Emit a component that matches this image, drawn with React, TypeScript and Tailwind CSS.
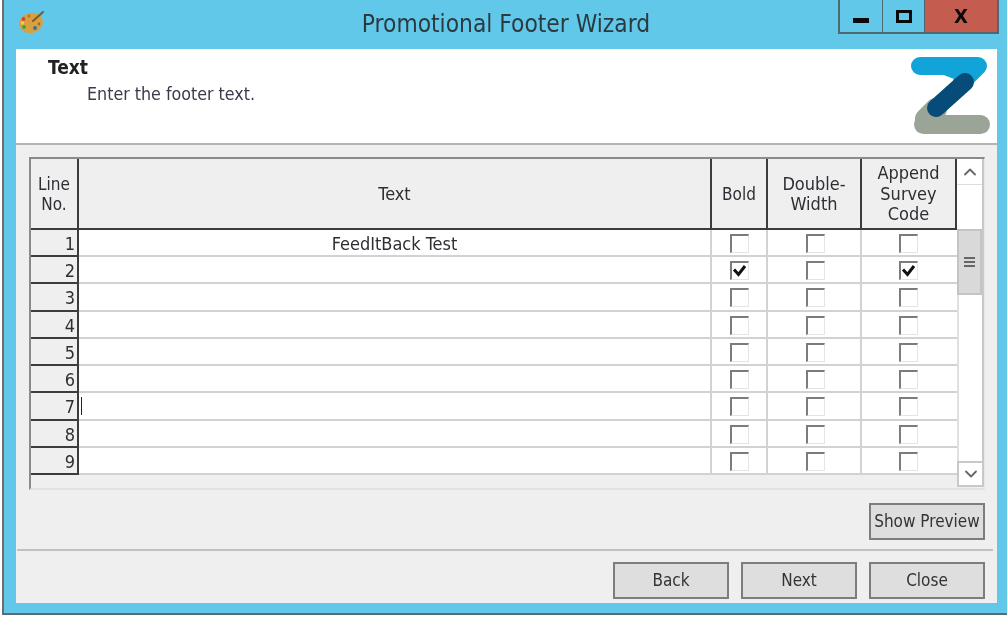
import { ChevronDown, ChevronUp } from 'lucide-react';

const rows = [
    { no: 1, text: 'FeedItBack Test', bold: false, append: false, tall: false },
    { no: 2, text: '', bold: true, append: true, tall: false },
    { no: 3, text: '', bold: false, append: false, tall: true },
    { no: 4, text: '', bold: false, append: false, tall: false },
    { no: 5, text: '', bold: false, append: false, tall: false },
    { no: 6, text: '', bold: false, append: false, tall: false },
    { no: 7, text: '', bold: false, append: false, tall: true },
    { no: 8, text: '', bold: false, append: false, tall: false },
    { no: 9, text: '', bold: false, append: false, tall: false },
];

const Palette = () => (
    <svg width="28" height="26" viewBox="0 0 28 26">
        <ellipse cx="13" cy="14" rx="12" ry="10" fill="#d9a040" transform="rotate(-15 13 14)" />
        <circle cx="5.5" cy="10" r="1.9" fill="#d8442e" />
        <circle cx="4.5" cy="14" r="1.7" fill="#e8d44a" />
        <circle cx="6" cy="18" r="1.9" fill="#4f9a45" />
        <circle cx="11" cy="7" r="1.5" fill="#b5702c" />
        <circle cx="17" cy="19" r="1.9" fill="#2f6db0" />
        <circle cx="21" cy="15" r="1.4" fill="#a8632a" />
        <path d="M15 12 L25 3" stroke="#7a5a2a" strokeWidth="2" strokeLinecap="round" />
    </svg>
);

const Logo = () => (
    <svg width="80" height="80" viewBox="0 0 80 80">
        <path d="M10 9 H68 L52 25" fill="#12a3d8" stroke="#12a3d8" strokeWidth="18" strokeLinecap="round" strokeLinejoin="round" />
        <path d="M13.5 67.5 H70.5" fill="none" stroke="#9aa597" strokeWidth="19" strokeLinecap="round" />
        <path d="M16 62 L26 52" fill="none" stroke="#9aa597" strokeWidth="22" strokeLinecap="round" />
        <path d="M55 25 L26 51" fill="none" stroke="#074c78" strokeWidth="18" strokeLinecap="round" />
    </svg>
);

const Check = ({ checked }: { checked: boolean }) => (
    <div className="flex h-[19px] w-[19px] items-center justify-center border-t-2 border-r border-b border-l-2 border-t-[#7c7c7c] border-r-[#e4e4e4] border-b-[#e4e4e4] border-l-[#7c7c7c] bg-white">
        {checked && (
            <svg width="15" height="13" viewBox="0 0 15 13">
                <path d="M2 5.5 L6.5 10.5 L13 2" fill="none" stroke="#111" strokeWidth="3" />
            </svg>
        )}
    </div>
);

const HeadCell = ({ children, className }: { children: React.ReactNode; className?: string }) => (
    <div className={`flex items-center justify-center border-r-2 border-r-[#3c3c3c] bg-[#efefef] pt-[1px] text-center leading-[20.5px] ${className ?? ''}`}>
        {children}
    </div>
);

const WinButton = ({ label, className }: { label: string; className?: string }) => (
    <button className={`h-[37px] w-[116px] border-2 border-[#7d7d7d] bg-[#dedede] text-[17px] text-[#333] ${className ?? ''}`}>
        {label}
    </button>
);

const App = () => {
    return (
        <div className="h-[617px] w-[1007px] overflow-hidden bg-white font-['DejaVu_Sans',sans-serif] text-[#2e2e34] blur-[0.5px] [font-stretch:condensed]">
            <div className="ml-[2px] h-[615px] border-b-2 border-l-2 border-b-[#5a6b75] border-l-[#6d6d6d] bg-[#62c8ea] pr-[10px] pl-[12px]">
                {/* title bar */}
                <div className="flex h-[49px] items-start">
                    <div className="mt-[9px] ml-[2px] w-[28px]">
                        <Palette />
                    </div>
                    <div className="flex h-[49px] flex-1 items-center justify-center pl-[128px] text-[24.3px] text-[#2c3a40]">
                        Promotional Footer Wizard
                    </div>
                    <div className="mr-[-2px] flex h-[34px] items-stretch border-r-2 border-b-2 border-l-2 border-[#4f6770]">
                        <div className="flex w-[43px] items-end justify-center border-r border-r-[#4f6770] pb-[9px]">
                            <div className="h-[5px] w-[16px] bg-[#0a0a0a]" />
                        </div>
                        <div className="flex w-[42px] items-center justify-center border-r border-r-[#4f6770]">
                            <div className="h-[13px] w-[16px] border-[3px] border-[#0a0a0a]" />
                        </div>
                        <div className="flex w-[72px] items-center justify-center bg-[#c45c50] text-[20px] font-extrabold text-[#0a0a0a]">
                            X
                        </div>
                    </div>
                </div>

                {/* client area */}
                <div className="h-[554px] w-[981px] bg-[#efefef]">
                    <div className="flex h-[96px] justify-between border-b-2 border-b-[#b4b4b4] bg-white pt-[8px] pr-[7px]">
                        <div className="pl-[32px] text-[#222]">
                            <div className="text-[19px] leading-[21px] font-bold">Text</div>
                            <div className="pt-[4px] pl-[39px] text-[17.7px] leading-[24px] text-[#3a3a4a]">Enter the footer text.</div>
                        </div>
                        <Logo />
                    </div>

                    {/* grid */}
                    <div className="mt-[12px] ml-[13px] flex h-[333px] w-[956px] border-t-2 border-r border-b-2 border-l-2 border-t-[#8a8a8a] border-r-[#e6e6e6] border-b-[#e2e2e2] border-l-[#8a8a8a] text-[18px]">
                        <div className="w-[926px]">
                            <div className="grid h-[71px] grid-cols-[48px_633px_56px_94px_95px] border-b-2 border-b-[#3c3c3c]">
                                <HeadCell className="text-[17px]">
                                    Line
                                    <br />
                                    No.
                                </HeadCell>
                                <HeadCell>Text</HeadCell>
                                <HeadCell className="text-[17px]">Bold</HeadCell>
                                <HeadCell>
                                    Double-
                                    <br />
                                    Width
                                </HeadCell>
                                <HeadCell>
                                    Append
                                    <br />
                                    Survey
                                    <br />
                                    Code
                                </HeadCell>
                            </div>
                            {rows.map((row) => (
                                <div key={row.no} className={`grid grid-cols-[48px_633px_56px_94px_95px] bg-white ${row.tall ? 'h-[28px]' : 'h-[27px]'}`}>
                                    <div className="border-r-2 border-b-2 border-r-[#3c3c3c] border-b-[#3c3c3c] bg-[#efefef] pt-[2px] pr-[2px] text-right leading-[23px]">
                                        {row.no}
                                    </div>
                                    <div className="relative border-r-2 border-b-2 border-[#d2d2d2] pt-[2px] text-center leading-[23px]">
                                        {row.text}
                                        {row.no === 7 && <div className="absolute top-[4px] left-[2px] h-[18px] w-[1px] bg-[#222]" />}
                                    </div>
                                    <div className="flex items-center justify-center border-r-2 border-b-2 border-[#d2d2d2] pt-[1px]">
                                        <Check checked={row.bold} />
                                    </div>
                                    <div className="flex items-center justify-center border-r-2 border-b-2 border-[#d2d2d2] pt-[1px] pl-[2px]">
                                        <Check checked={false} />
                                    </div>
                                    <div className="flex items-center justify-center border-b-2 border-[#d2d2d2] pt-[1px] pr-[3px]">
                                        <Check checked={row.append} />
                                    </div>
                                </div>
                            ))}
                        </div>
                        <div className="mb-[1px] flex w-[27px] flex-col border-r-2 border-r-[#c8c8c8] bg-white">
                            <div className="flex h-[26px] items-center justify-center border-b border-b-[#dddddd] text-[#666]">
                                <ChevronUp size={20} strokeWidth={2.2} />
                            </div>
                            <div className="mt-[44px] flex h-[66px] flex-col items-center justify-center gap-[2px] border-2 border-[#c4c4c4] bg-[#d9d9d9]">
                                <div className="h-[2px] w-[11px] bg-[#666]" />
                                <div className="h-[2px] w-[11px] bg-[#666]" />
                                <div className="h-[2px] w-[11px] bg-[#666]" />
                            </div>
                            <div className="flex-1 border-l-2 border-l-[#e0e0e0]" />
                            <div className="flex h-[26px] items-center justify-center border-t-2 border-b-2 border-l-2 border-[#c8c8c8] text-[#666]">
                                <ChevronDown size={20} strokeWidth={2.2} />
                            </div>
                        </div>
                    </div>

                    <div className="mt-[13px] mr-[12px] flex justify-end">
                        <WinButton label="Show Preview" className="text-[16px] whitespace-nowrap" />
                    </div>
                    <div className="mt-[9px] mr-[4px] ml-[1px] h-[2px] bg-[#c0c0c0]" />
                    <div className="mt-[11px] mr-[12px] flex justify-end gap-[12px]">
                        <WinButton label="Back" />
                        <WinButton label="Next" className="border-[#5a93c4]" />
                        <WinButton label="Close" />
                    </div>
                </div>
            </div>
        </div>
    );
};

export default App;
